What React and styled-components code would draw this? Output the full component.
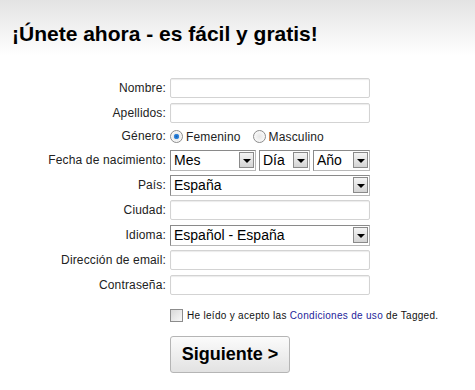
import React from 'react'
import styled, { createGlobalStyle } from 'styled-components'

const Global = createGlobalStyle`
  html, body { margin: 0; padding: 0; background: #fff; }
  body { font-family: "Liberation Sans", Arial, sans-serif; color: #111; }
`

const Page = styled.div`
  width: 475px;
  height: 390px;
  overflow: hidden;
`

const Header = styled.div`
  height: 56px;
  padding: 22px 0 0 12px;
  box-sizing: border-box;
  background: linear-gradient(#e3e3e3, #ffffff);

  h1 {
    margin: 0;
    font-size: 21px;
    line-height: 24px;
    font-weight: bold;
    color: #000;
  }
`

const Form = styled.div`
  display: grid;
  grid-template-columns: 166px 200px;
  column-gap: 4px;
  row-gap: 5px;
  margin-top: 22px;
`

const Label = styled.div`
  text-align: right;
  font-size: 12px;
  letter-spacing: 0.15px;
  line-height: ${p => p.h || 20}px;
  color: #222;
`

const Field = styled.div`
  display: flex;
  align-items: center;
  gap: ${p => p.gap || 0}px;
  height: ${p => p.h || 20}px;
`

const TextInput = styled.input`
  width: 200px;
  height: 20px;
  box-sizing: border-box;
  border: 1px solid #d3d3d3;
  border-radius: 2px;
  box-shadow: inset 0 1px 1px #ececec;
  padding: 0 3px;
  margin: 0;
  font-size: 12px;
  outline: none;
`

const SelectBox = styled.div`
  width: ${p => p.w}px;
  height: 21px;
  box-sizing: border-box;
  border: 1px solid #8a8a8a;
  border-right-color: #b8b8b8;
  border-bottom-color: #b8b8b8;
  display: flex;
  align-items: center;
  justify-content: space-between;
  padding: 0 1px 0 3px;
  background: #fff;
  font-size: 14px;
  color: #000;
`

const Arrow = styled.span`
  width: 15px;
  height: 16px;
  box-sizing: border-box;
  border: 1px solid #8a8a8a;
  background: linear-gradient(#f4f4f4, #d4d4d4);
  display: flex;
  align-items: center;
  justify-content: center;

  &::after {
    content: '';
    border-left: 4px solid transparent;
    border-right: 4px solid transparent;
    border-top: 4px solid #000;
    margin-top: 1px;
  }
`

const Radio = styled.span`
  width: 13px;
  height: 13px;
  box-sizing: border-box;
  border-radius: 50%;
  border: 1px solid #8c8c8c;
  background: ${p => p.on
    ? 'radial-gradient(circle, #0d5cb8 0, #3b8ee0 2.5px, #e9e9e9 3px, #fdfdfd 6px)'
    : 'radial-gradient(circle, #e6e6e6 0, #fafafa 6px)'};
  margin-right: 3px;
`

const Option = styled.span`
  display: flex;
  align-items: center;
  font-size: 12px;
  letter-spacing: 0.15px;
  color: #222;
  margin-right: ${p => p.mr || 0}px;
`

const Terms = styled.div`
  display: flex;
  align-items: center;
  margin: 14px 0 0 170px;
  font-size: 10px;
  color: #111;
  letter-spacing: 0.3px;

  a { color: #24249a; text-decoration: none; }
`

const CheckBox = styled.span`
  width: 13px;
  height: 13px;
  box-sizing: border-box;
  border: 1px solid #8c8c8c;
  background: linear-gradient(135deg, #d9d9d9, #f8f8f8);
  margin-right: 4px;
`

const NextButton = styled.button`
  display: block;
  margin: 14px 0 0 170px;
  width: 120px;
  height: 37px;
  border: 1px solid #b5b5b5;
  border-radius: 3px;
  background: linear-gradient(#fbfbfb, #e2e2e2);
  font-family: "Liberation Sans", Arial, sans-serif;
  font-size: 18px;
  font-weight: bold;
  color: #000;
  padding: 0;
`

const SelectField = ({ w, value }) => (
  <SelectBox w={w}>
    <span>{value}</span>
    <Arrow />
  </SelectBox>
)

export default function App() {
  return (
    <Page>
      <Global />
      <Header>
        <h1>¡Únete ahora - es fácil y gratis!</h1>
      </Header>
      <Form>
        <Label>Nombre:</Label>
        <Field><TextInput /></Field>
        <Label>Apellidos:</Label>
        <Field><TextInput /></Field>
        <Label h={17}>Género:</Label>
        <Field h={17}>
          <Option mr={12}><Radio on />Femenino</Option>
          <Option><Radio />Masculino</Option>
        </Field>
        <Label>Fecha de nacimiento:</Label>
        <Field gap={3}>
          <SelectField w={86} value="Mes" />
          <SelectField w={51} value="Día" />
          <SelectField w={57} value="Año" />
        </Field>
        <Label>País:</Label>
        <Field><SelectField w={200} value="España" /></Field>
        <Label>Ciudad:</Label>
        <Field><TextInput /></Field>
        <Label>Idioma:</Label>
        <Field><SelectField w={200} value="Español - España" /></Field>
        <Label>Dirección de email:</Label>
        <Field><TextInput /></Field>
        <Label>Contraseña:</Label>
        <Field><TextInput /></Field>
      </Form>
      <Terms>
        <CheckBox />
        He leído y acepto las&nbsp;<a href="#">Condiciones de uso</a>&nbsp;de Tagged.
      </Terms>
      <NextButton>Siguiente &gt;</NextButton>
    </Page>
  )
}
